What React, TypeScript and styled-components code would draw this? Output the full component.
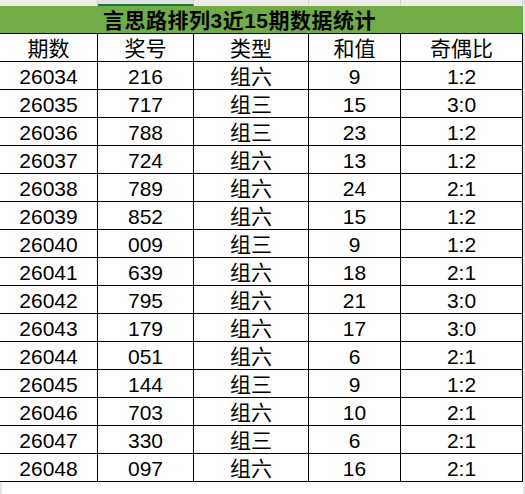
import styled, { createGlobalStyle } from "styled-components";

const GlobalStyle = createGlobalStyle`
    html, body { margin: 0; padding: 0; background: #ffffff; }
    body { font-family: "Liberation Sans", "Noto Sans CJK SC", sans-serif; color: #000; }
`

type Row = [string, string, string, string, string]

const headers = ["期数", "奖号", "类型", "和值", "奇偶比"]
const colWidths = [98, 96, 115, 92, 122]

const rows: Row[] = [
    ["26034", "216", "组六", "9", "1:2"],
    ["26035", "717", "组三", "15", "3:0"],
    ["26036", "788", "组三", "23", "1:2"],
    ["26037", "724", "组六", "13", "1:2"],
    ["26038", "789", "组六", "24", "2:1"],
    ["26039", "852", "组六", "15", "1:2"],
    ["26040", "009", "组三", "9", "1:2"],
    ["26041", "639", "组六", "18", "2:1"],
    ["26042", "795", "组六", "21", "3:0"],
    ["26043", "179", "组六", "17", "3:0"],
    ["26044", "051", "组六", "6", "2:1"],
    ["26045", "144", "组三", "9", "1:2"],
    ["26046", "703", "组六", "10", "2:1"],
    ["26047", "330", "组三", "6", "2:1"],
    ["26048", "097", "组六", "16", "2:1"],
]

const Page = styled.div`
    display: flex;
    width: 525px; height: 494px; overflow: hidden;
`
const SheetCol = styled.div`
    display: flex; flex-direction: column;
    width: 523px;
`
const Edge = styled.div`
    flex: 1;
    background: #e4e4e4;
`
const ColumnStrip = styled.div`
    display: flex;
    height: 6px;
    background: #ececec;
`
const StripCell = styled.div<{ $w: number; $active?: boolean }>`
    width: ${p => p.$w}px; box-sizing: border-box;
    border-right: 1px solid #cdcdcd;
    background: ${p => p.$active ? "#e2e2e2" : "#ececec"};
    border-bottom: 2px solid ${p => p.$active ? "#217346" : "transparent"};
`
const Grid = styled.div`
    display: grid;
    grid-template-columns: ${colWidths.map(w => w + "px").join(" ")};
`
const TitleRow = styled.div`
    grid-column: 1 / -1;
    height: 28px; box-sizing: border-box;
    padding: 3px 0 0 103px;
    background: #70ad47;
    border-bottom: 1px solid #000;
    font-size: 21px; font-weight: bold; line-height: 24px;
    letter-spacing: 0.5px;
    white-space: nowrap;
`
const Cell = styled.div`
    height: 28px; box-sizing: border-box;
    padding-top: 3px;
    border-right: 1px solid #000;
    border-bottom: 1px solid #000;
    text-align: center;
    font-size: 21px; line-height: 24px;
    white-space: nowrap;
`
const BottomFill = styled.div`
    flex: 1;
    border-left: 2px solid #e4e4e4;
`

export default function App() {
    return (
        <>
            <GlobalStyle />
            <Page>
                <SheetCol>
                    <ColumnStrip>
                        {colWidths.map((w, i) => <StripCell key={i} $w={w} $active={i === 1} />)}
                    </ColumnStrip>
                    <Grid>
                        <TitleRow>言思路排列3近15期数据统计</TitleRow>
                        {headers.map(h => <Cell key={h}>{h}</Cell>)}
                        {rows.map(r => r.map((v, i) => <Cell key={r[0] + i}>{v}</Cell>))}
                    </Grid>
                    <BottomFill />
                </SheetCol>
                <Edge />
            </Page>
        </>
    )
}
